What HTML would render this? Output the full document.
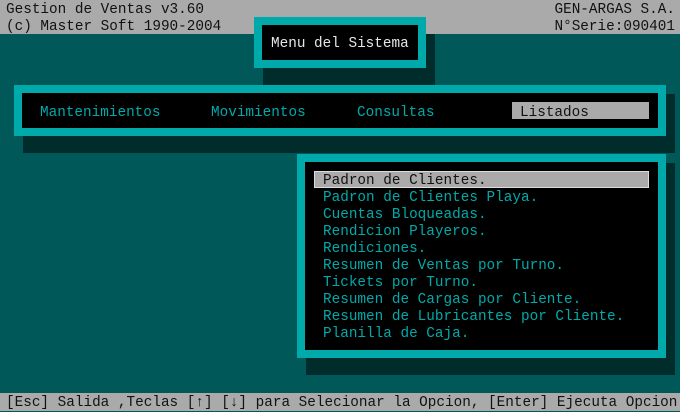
<!DOCTYPE html>
<html><head><meta charset="utf-8"><style>
*{margin:0;padding:0;box-sizing:border-box}
body{width:680px;height:411px;overflow:hidden;background:#005858;font-family:"Liberation Mono",monospace;font-size:14.35px;position:relative}
.a{position:absolute;white-space:pre;line-height:17px;padding-top:2px}
.bar{position:absolute;left:0;width:680px;background:#aaaaaa}
.sh{position:absolute;background:#002c2c}
.bx{position:absolute;border:8px solid #00aaaa;background:#000}
.c{color:#00aaaa}
</style></head><body>
<div class="bar" style="top:0;height:34px"></div>
<div class="a" style="left:6px;top:0;color:#111">Gestion de Ventas v3.60
(c) Master Soft 1990-2004</div>
<div class="a" style="right:5px;top:0;color:#111;text-align:right">GEN-ARGAS S.A.
N°Serie:090401</div>

<div class="sh" style="left:263px;top:34px;width:172px;height:51px"></div>
<div class="bx" style="left:254px;top:17px;width:172px;height:51px"></div>
<div class="a" style="left:271px;top:34px;color:#e6e6e6">Menu del Sistema</div>

<div class="sh" style="left:23px;top:94px;width:652px;height:59px"></div>
<div class="bx" style="left:14px;top:85px;width:652px;height:51px"></div>
<div class="a c" style="left:40px;top:103px">Mantenimientos</div>
<div class="a c" style="left:211px;top:103px">Movimientos</div>
<div class="a c" style="left:357px;top:103px">Consultas</div>
<div style="position:absolute;left:512px;top:102px;width:137px;height:17px;background:#aaaaaa"></div>
<div class="a" style="left:520px;top:103px;color:#111">Listados</div>

<div class="sh" style="left:306px;top:163px;width:369px;height:212px"></div>
<div class="bx" style="left:297px;top:154px;width:369px;height:204px"></div>
<div style="position:absolute;left:314px;top:171px;width:335px;height:17px;background:#aaaaaa;border:1px solid #ddd"></div>
<div class="a" style="left:323px;top:171px;color:#111">Padron de Clientes.</div>
<div class="a c" style="left:323px;top:188px">Padron de Clientes Playa.
Cuentas Bloqueadas.
Rendicion Playeros.
Rendiciones.
Resumen de Ventas por Turno.
Tickets por Turno.
Resumen de Cargas por Cliente.
Resumen de Lubricantes por Cliente.
Planilla de Caja.</div>

<div class="bar" style="top:393px;height:18px"></div>
<div class="a" style="left:6px;top:393px;color:#111">[Esc] Salida ,Teclas [↑] [↓] para Selecionar la Opcion, [Enter] Ejecuta Opcion</div>
</body></html>
